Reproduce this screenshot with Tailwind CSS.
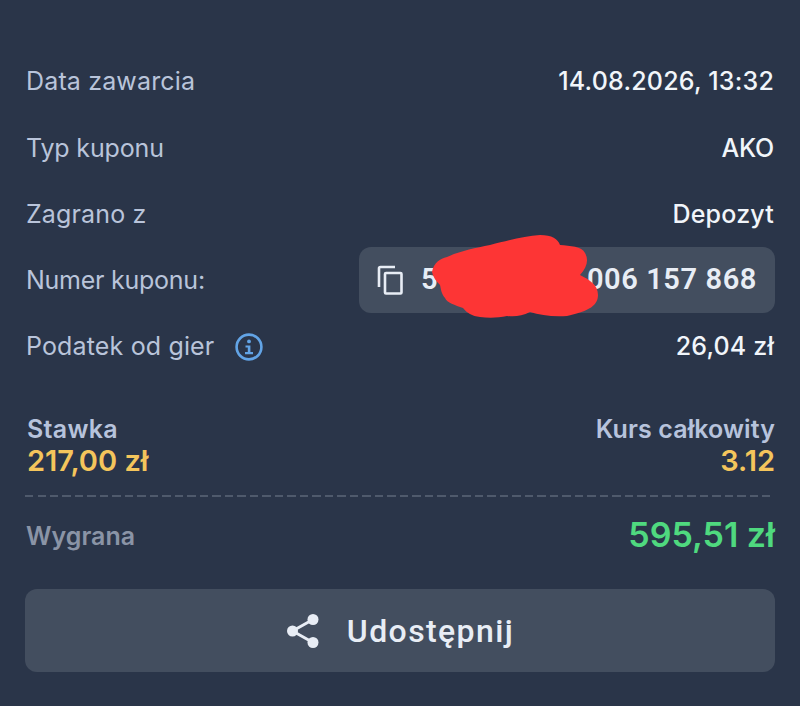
<!DOCTYPE html>
<html lang="pl">
<head>
<meta charset="utf-8">
<script src="https://cdn.jsdelivr.net/npm/@tailwindcss/browser@4"></script>
</head>
<body class="m-0">
<main class="relative w-[800px] h-[706px] overflow-hidden bg-[#2a3549] px-[25px] pt-[48px] font-['Inter',sans-serif]">
  <div class="flex flex-col text-[25px] tracking-[0.15px]">
    <div class="flex h-[67px] items-center justify-between pl-[1px] pr-[1px]">
      <span class="text-[#b9c4da]">Data zawarcia</span>
      <span class="text-[#f1f5fa] font-medium tracking-[0.2px]">14.08.2026, 13:32</span>
    </div>
    <div class="flex h-[67px] items-center justify-between pl-[1px] pr-[1px]">
      <span class="tracking-[-0.15px] text-[#b9c4da]">Typ kuponu</span>
      <span class="text-[#f1f5fa] font-medium tracking-[-0.2px]">AKO</span>
    </div>
    <div class="flex h-[65px] items-center justify-between pl-[1px] pr-[1px]">
      <span class="text-[#b9c4da]">Zagrano z</span>
      <span class="text-[#f1f5fa] font-medium tracking-[0.2px]">Depozyt</span>
    </div>
    <div class="flex h-[66px] items-center justify-between pl-[1px]">
      <span class="pt-[2px] tracking-[-0.25px] text-[#b9c4da]">Numer kuponu:</span>
      <div class="flex h-[66px] w-[416px] items-center justify-between rounded-[12px] bg-[#434e5f] pl-[18px] pr-[18px]">
        <svg class="w-[26px] h-[30px]" viewBox="0 0 26 30" fill="none" stroke="#e8edf5" stroke-width="2.6">
          <path d="M18 2H3.5A1.5 1.5 0 0 0 2 3.5V22"/>
          <rect x="8" y="8" width="16.5" height="20.5" rx="1"/>
        </svg>
        <span class="ml-[18px] flex-1 flex justify-between text-[29px] font-semibold tracking-[0.6px] text-[#e8edf5] font-['Roboto',sans-serif]"><span>5</span><span>006 157 868</span></span>
      </div>
    </div>
    <div class="flex h-[68px] items-center justify-between pl-[1px] pr-[1px]">
      <span class="flex items-center gap-[21px] text-[#b9c4da]">Podatek od gier
        <svg class="w-[28px] h-[28px]" viewBox="0 0 28 28" fill="none">
          <circle cx="14" cy="14" r="12.4" stroke="#62a4e6" stroke-width="2.6"/>
          <circle cx="14" cy="8.4" r="1.9" fill="#62a4e6"/>
          <path d="M10.5 12.4H15.4V19H18V21.2H10V19H12.8V14.6H10.5Z" fill="#62a4e6"/>
        </svg>
      </span>
      <span class="text-[#f1f5fa] font-medium tracking-[0.2px]">26,04 zł</span>
    </div>
  </div>

  <div class="mt-[32px] flex items-start justify-between pl-[2px] font-semibold leading-[32px]">
    <div class="flex flex-col">
      <span class="text-[25px] tracking-[0.3px] text-[#b7c3dc]">Stawka</span>
      <span class="text-[29px] text-[#f4c55c]">217,00 zł</span>
    </div>
    <div class="flex flex-col items-end">
      <span class="text-[25px] tracking-[0.1px] text-[#b7c3dc]">Kurs całkowity</span>
      <span class="text-[29px] text-[#f4c55c]">3.12</span>
    </div>
  </div>

  <div class="mt-[18px] mr-[5px] h-[2px] bg-[repeating-linear-gradient(90deg,#4f5a6c_0_8px,transparent_8px_12.5px)]"></div>

  <div class="mt-[17px] flex h-[44px] items-center justify-between">
    <span class="pl-[1px] pt-[2px] text-[25px] font-semibold text-[#8a94a6]">Wygrana</span>
    <span class="pb-[4px] text-[34px] font-semibold text-[#4fd97f]">595,51 zł</span>
  </div>

  <button class="mt-[31px] flex h-[83px] w-full items-center justify-center gap-[27px] rounded-[12px] bg-[#434e5f]">
    <svg class="w-[34px] h-[36px]" viewBox="0 0 34 36" fill="#e8edf5">
      <circle cx="6.5" cy="18" r="5.5"/>
      <circle cx="27" cy="6.5" r="5.5"/>
      <circle cx="27" cy="29.5" r="5.5"/>
      <path d="M6.5 18 27 6.5M6.5 18 27 29.5" stroke="#e8edf5" stroke-width="3" fill="none"/>
    </svg>
    <span class="text-[32px] font-medium tracking-[1.4px] text-[#e8edf5] font-['Roboto',sans-serif]">Udostępnij</span>
  </button>

  <svg class="absolute left-[430px] top-[233px] w-[170px] h-[86px]" viewBox="0 0 170 86" fill="#fd3535">
    <path d="M2 39C4 29 10 26 17 24C30 18 45 15 60 12C80 7 95 3 110 2C122 2 128 6 130 12C140 13 152 13 155 20C159 27 157 34 150 42C160 47 168 52 168 62C168 72 160 78 137 83C122 84 110 82 100 79C92 83 85 84 77 83C68 85 58 85 50 84C42 83 37 80 33 75C25 72 17 70 15 65C11 60 11 56 10 52C6 48 3 44 2 39Z"/>
  </svg>
</main>
</body>
</html>
